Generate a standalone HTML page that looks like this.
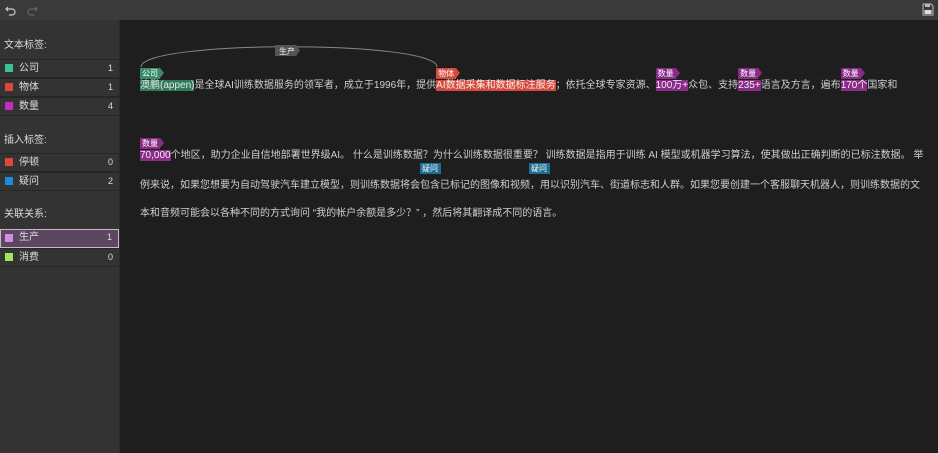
<!DOCTYPE html>
<html><head><meta charset="utf-8"><style>
*{margin:0;padding:0;box-sizing:border-box}
body{width:938px;height:453px;background:#1e1e1e;font-family:"Liberation Sans","Noto Sans CJK SC",sans-serif;color:#d0d0d0;position:relative;overflow:hidden}
.top{position:absolute;left:0;top:0;width:938px;height:20px;background:#3a3a3a}
.side{position:absolute;left:0;top:20px;width:120px;height:433px;background:#333;border-right:1px solid #2a2a2a}
.h{position:absolute;left:4px;font-size:10px;color:#ddd;line-height:12px}
.row{position:absolute;left:0;width:119px;height:19px;border-top:1px solid #262626;border-bottom:1px solid #262626;font-size:10px;color:#ddd;line-height:17px}
.row .sq{position:absolute;left:5px;top:4px;width:8px;height:8px}
.row .t{position:absolute;left:19px;top:0}
.row .n{position:absolute;right:6px;top:0;font-size:9px}
.sel{background:#5b4760;border:1px solid #cbb6d2}
.ln{position:absolute;left:140px;font-size:10px;white-space:nowrap;color:#cfcfcf;line-height:14px}
.ln span{position:relative}
.tag{position:absolute;left:0;top:-12px;width:20px;height:11px;font-size:8px;color:#fff;line-height:11px;padding-left:2px}
.tag:after{content:"";position:absolute;right:-4px;top:0;border-left:4px solid;border-top:5.5px solid transparent;border-bottom:5.5px solid transparent;border-left-color:inherit}
.btag{position:absolute;width:21px;height:11px;font-size:8px;color:#fff;line-height:11px;padding-left:2px}
.g{background:#3b8a6a;border-color:#3b8a6a}
.r{background:#d8493c;border-color:#d8493c}
.p{background:#8a2b88;border-color:#8a2b88}
.b{background:#1d6e94;border-color:#1d6e94}
.hg{background:#2f7a5c;color:#e8e8e8}
.hr{background:#d8493c;color:#f0f0f0}
.hp{background:#8a2b88;color:#f0f0f0}
</style></head><body>
<div class="top">
<svg style="position:absolute;left:5px;top:4px" width="12" height="12" viewBox="0 0 12 12"><path d="M3 3 L1 5 L3 7 M1 5 H7 A3 3 0 0 1 7 11 H4" fill="none" stroke="#ccc" stroke-width="1.2"/></svg>
<svg style="position:absolute;left:26px;top:4px" width="12" height="12" viewBox="0 0 12 12"><path d="M9 3 L11 5 L9 7 M11 5 H5 A3 3 0 0 0 5 11 H8" fill="none" stroke="#666" stroke-width="1.2"/></svg>
<svg style="position:absolute;left:922px;top:3px" width="12" height="13" viewBox="0 0 12 13"><path d="M1 1 H9 L11 3 V12 H1 Z" fill="none" stroke="#bbb" stroke-width="1"/><rect x="3" y="1" width="5" height="3" fill="#bbb"/><rect x="2.5" y="7" width="7" height="4" fill="#ddd"/></svg>
</div>
<div class="side">
<div class="h" style="top:20px">文本标签:</div>
<div class="row" style="top:39px"><div class="sq" style="background:#3fc08f"></div><span class="t">公司</span><span class="n">1</span></div>
<div class="row" style="top:58px"><div class="sq" style="background:#e0473a"></div><span class="t">物体</span><span class="n">1</span></div>
<div class="row" style="top:77px"><div class="sq" style="background:#c22ec0"></div><span class="t">数量</span><span class="n">4</span></div>
<div class="h" style="top:115px">插入标签:</div>
<div class="row" style="top:133px"><div class="sq" style="background:#e0473a"></div><span class="t">停顿</span><span class="n">0</span></div>
<div class="row" style="top:152px"><div class="sq" style="background:#1a8fd6"></div><span class="t">疑问</span><span class="n">2</span></div>
<div class="h" style="top:189px">关联关系:</div>
<div class="row sel" style="top:209px"><div class="sq" style="background:#d58ce6;left:4px;top:4px"></div><span class="t" style="left:18px;top:-1px">生产</span><span class="n" style="top:-1px">1</span></div>
<div class="row" style="top:228px"><div class="sq" style="background:#9be75a"></div><span class="t">消费</span><span class="n">0</span></div>
</div>

<svg style="position:absolute;left:0;top:0" width="938" height="100"><path d="M141 67 C141 40 437 40 437 67" fill="none" stroke="#888" stroke-width="1"/><path d="M275 45 H296 L300 50.5 L296 56 H275 Z" fill="#555"/><text x="279" y="54" font-size="8" fill="#eee" font-family="Noto Sans CJK SC">生产</text></svg>

<div class="btag b" style="left:420px;top:163px">疑问</div>
<div class="btag b" style="left:529px;top:163px">疑问</div>

<div class="ln" style="top:79px"><span class="hg"><i class="tag g" style="font-style:normal">公司</i>澳鹏(appen)</span>是全球AI训练数据服务的领军者，成立于1996年，提供<span class="hr"><i class="tag r" style="font-style:normal">物体</i>AI数据采集和数据标注服务</span>；依托全球专家资源、<span class="hp"><i class="tag p" style="font-style:normal">数量</i>100万+</span>众包、支持<span class="hp"><i class="tag p" style="font-style:normal">数量</i>235+</span>语言及方言，遍布<span class="hp"><i class="tag p" style="font-style:normal">数量</i>170个</span>国家和</div>
<div class="ln" style="top:149px"><span class="hp"><i class="tag p" style="font-style:normal">数量</i>70,000</span>个地区，助力企业自信地部署世界级AI。 什么是训练数据？为什么训练数据很重要？ 训练数据是指用于训练 AI 模型或机器学习算法，使其做出正确判断的已标注数据。 举</div>
<div class="ln" style="top:179px">例来说，如果您想要为自动驾驶汽车建立模型，则训练数据将会包含已标记的图像和视频，用以识别汽车、街道标志和人群。如果您要创建一个客服聊天机器人，则训练数据的文</div>
<div class="ln" style="top:207px">本和音频可能会以各种不同的方式询问 “我的帐户余额是多少？” ，然后将其翻译成不同的语言。</div>
</body></html>
